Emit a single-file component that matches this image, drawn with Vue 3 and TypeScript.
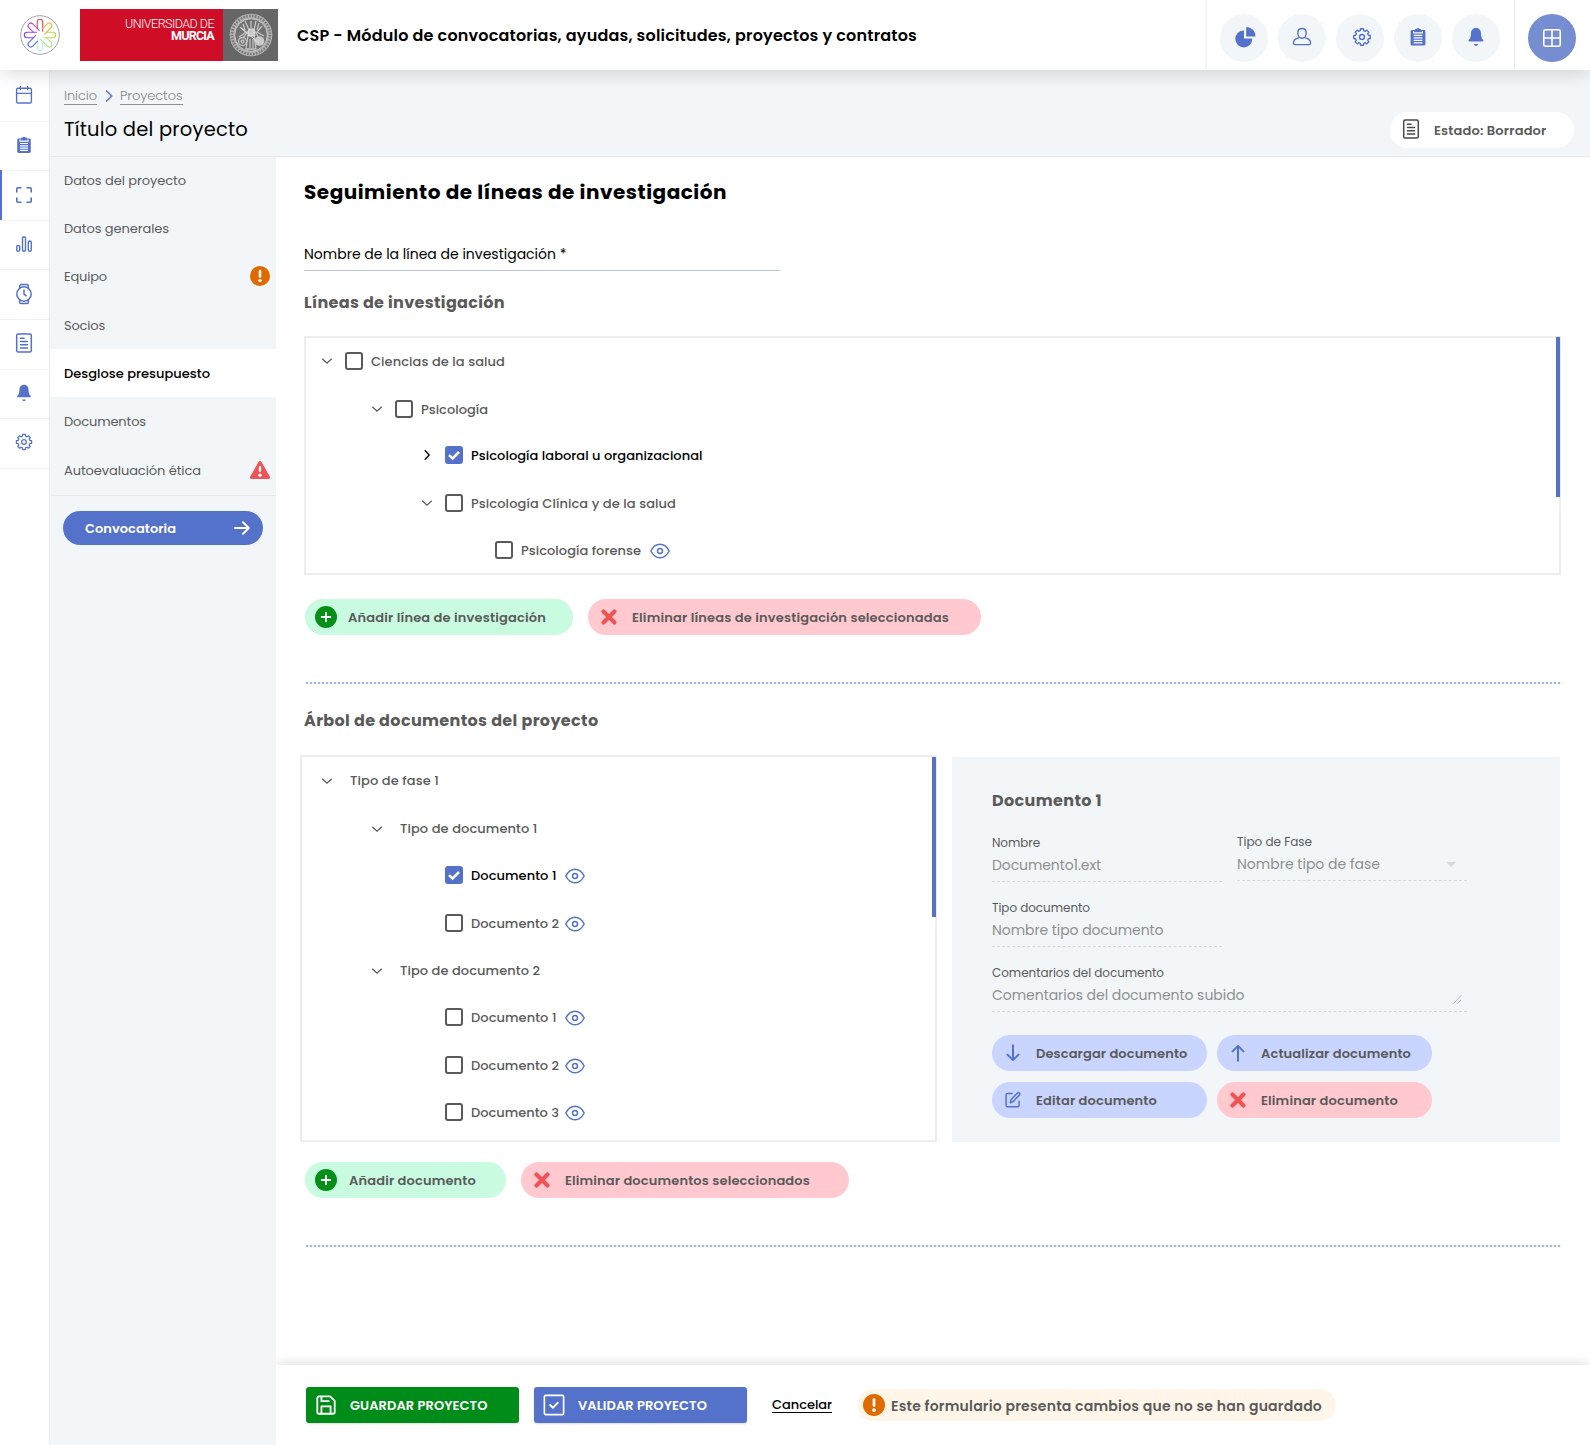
<script setup lang="ts">
interface TreeNode {
  label: string
  level: number
  width: number
  gap: number
  open?: 'down' | 'right'
  check?: boolean
  checked?: boolean
  eye?: boolean
}

// Tracks a label so that it takes exactly the given width.
const vFit = {
  mounted(el: HTMLElement, binding: { value: number }) {
    const natural = el.getBoundingClientRect().width
    const count = (el.textContent ?? '').length
    el.style.letterSpacing = `${(binding.value - natural) / count}px`
  },
}

function gearPath(outer: number, inner: number): string {
  const pts: string[] = []
  for (let i = 0; i < 8; i++) {
    for (const [r, d] of [[inner, -15], [outer, -10], [outer, 10], [inner, 15]]) {
      const a = ((i * 45 + d - 90) * Math.PI) / 180
      pts.push(`${(12 + r * Math.cos(a)).toFixed(2)} ${(12 + r * Math.sin(a)).toFixed(2)}`)
    }
  }
  return `M${pts.join('L')}Z`
}

const line = 'fill="none" stroke="currentColor" stroke-linecap="round" stroke-linejoin="round"'

const icons: Record<string, string> = {
  calendar: `<g ${line} stroke-width="1.4"><rect x="4.6" y="5.2" width="14.8" height="14.8" rx="1.6"/><path d="M4.6 10.4H19.4M8.400 3.400V6.600M15.600 3.400V6.600"/></g>`,
  clipboard: `<path fill="currentColor" d="M6 5h2.600l.8-1.100h1.200a1.500 1.500 0 0 1 2.800 0h1.200L15.400 5H18a1.400 1.400 0 0 1 1.400 1.400v12.800A1.400 1.400 0 0 1 18 20.600H6a1.400 1.400 0 0 1-1.400-1.400V6.400A1.400 1.400 0 0 1 6 5Z"/><path stroke="#fff" stroke-width="1.200" fill="none" d="M7.600 6V7.800H16.400V6M7.600 10.400h8.800M7.600 12.900h8.800M7.600 15.400h8.800M7.600 17.900h8.800"/>`,
  expand: `<path ${line} stroke-width="1.6" d="M4.800 9V5.800a1 1 0 0 1 1-1H9M15 4.800h3.200a1 1 0 0 1 1 1V9M19.200 15v3.200a1 1 0 0 1-1 1H15M9 19.200H5.800a1 1 0 0 1-1-1V15"/>`,
  bars: `<g ${line} stroke-width="1.400"><rect x="4.700" y="13.500" width="3" height="5.800" rx="1.500"/><rect x="10.500" y="4.700" width="3" height="14.600" rx="1.500"/><rect x="16.300" y="9" width="3" height="10.300" rx="1.500"/></g>`,
  watch: `<g ${line} stroke-width="1.500"><circle cx="12" cy="12" r="7.200"/><path d="M7.700 6V3.800a1.200 1.200 0 0 1 1.200-1.200h6.200a1.200 1.200 0 0 1 1.200 1.200V6M7.700 18v2.200a1.200 1.200 0 0 0 1.200 1.200h6.200a1.200 1.200 0 0 0 1.200-1.200V18M12 8v4.200l2.200 1.600"/></g>`,
  page: `<g ${line} stroke-width="1.500"><rect x="4.700" y="2.900" width="14.600" height="18.200" rx="1.400"/><path d="M8.500 7.200h3.500M8.500 10.500h7M8.500 13.700h7M8.500 16.900h7"/></g>`,
  bell: `<path fill="currentColor" d="M12 3c3.500 0 5 2.600 5 5.600 0 3.600.8 5.200 2.200 6.400.6.700.2 1.500-.6 1.500H5.400c-.8 0-1.200-.8-.6-1.500C6.200 13.800 7 12.200 7 8.600 7 5.600 8.500 3 12 3ZM10.100 19h3.800a1.900 1.900 0 0 1-3.800 0Z"/>`,
  gear: `<g ${line} stroke-width="1.400"><path d="${gearPath(8.400, 6.600)}"/><circle cx="12" cy="12" r="2.500"/></g>`,
  pie: `<path fill="currentColor" d="M11 5.400V13.600h8.300A8.500 8.500 0 1 1 11 5.400ZM13.200 2a9 9 0 0 1 9.300 9.400H13.200Z"/>`,
  user: `<g ${line} stroke-width="1.400"><path d="M12 3.500c2.700 0 4.200 2 4.200 4.700S14.500 13.200 12 13.200 7.800 10.900 7.800 8.200 9.300 3.500 12 3.500Z"/><path d="M8.600 12.900c-3.500.8-5.200 2.300-5.200 5.100 0 1 .6 1.600 1.500 1.600h14.200c.9 0 1.500-.6 1.500-1.600 0-2.800-1.700-4.300-5.200-5.100"/></g>`,
  grid: `<g ${line} stroke-width="1.600"><rect x="3.800" y="3.800" width="16.400" height="16.400" rx="1.500"/><path d="M12 3.800V20.200M3.800 12H20.200"/></g>`,
  plus: `<circle cx="12" cy="12" r="12" fill="currentColor"/><path stroke="#fff" stroke-width="2" stroke-linecap="round" d="M12 7.300v9.400M7.300 12h9.400"/>`,
  cross: `<path stroke="currentColor" stroke-width="4.600" stroke-linecap="round" d="M6 6l12 12M18 6 6 18"/>`,
  alert: `<circle cx="12" cy="12" r="12" fill="currentColor"/><path stroke="#fff" stroke-width="3" stroke-linecap="round" d="M12 6v6.500"/><circle cx="12" cy="17.500" r="2" fill="#fff"/>`,
  triangle: `<path fill="currentColor" d="M10.300 2.200a2 2 0 0 1 3.400 0l10 17.600a1.900 1.900 0 0 1-1.700 2.900H2a1.900 1.900 0 0 1-1.700-2.900Z"/><path stroke="#fff" stroke-width="2.800" stroke-linecap="round" d="M12 8.500v4.500"/><circle cx="12" cy="18.300" r="2" fill="#fff"/>`,
  eye: `<g ${line} stroke-width="1.600"><path d="M2 12C4.300 7.600 7.700 4.600 12 4.600S19.700 7.600 22 12c-2.300 4.400-5.700 7.400-10 7.400S4.300 16.400 2 12Z"/><circle cx="12" cy="12" r="2.700"/></g>`,
  down: `<path ${line} stroke-width="2.200" d="M12 3.500v16M6 13.800l6 6 6-6"/>`,
  up: `<path ${line} stroke-width="2.200" d="M12 20.500v-16M6 10.200l6-6 6 6"/>`,
  edit: `<g ${line} stroke-width="1.800"><path d="M11 4.200H5.200a1.500 1.500 0 0 0-1.500 1.500v13a1.500 1.500 0 0 0 1.500 1.500h12.600a1.500 1.500 0 0 0 1.500-1.500V13.500"/><path d="M8.800 15.200l.8-3.600 8.100-8.300c1-.9 3.300 1.200 2.300 2.300l-8 8.600Z"/></g>`,
  save: `<g ${line} stroke-width="2"><path d="M4.500 2.500h12l5 5v12a2 2 0 0 1-2 2h-15a2 2 0 0 1-2-2v-15a2 2 0 0 1 2-2Z"/><path d="M7 21v-7.500h10V21M7 3v4.800h8"/></g>`,
  valid: `<g ${line} stroke-width="1.800"><rect x="1.500" y="1.500" width="21" height="21" rx="1.500"/><path stroke-width="2" d="M7.800 12l3 3 5.400-5.600"/></g>`,
}

const rail = ['calendar', 'clipboard', 'expand', 'bars', 'watch', 'page', 'bell', 'gear']
const tools = ['pie', 'user', 'gear', 'clipboard', 'bell']

const nav = [
  { label: 'Datos del proyecto', width: 122 },
  { label: 'Datos generales', width: 105 },
  { label: 'Equipo', width: 43, mark: 'alert' },
  { label: 'Socios', width: 41 },
  { label: 'Desglose presupuesto', width: 146, active: true },
  { label: 'Documentos', width: 82 },
  { label: 'Autoevaluación ética', width: 137, mark: 'triangle' },
]

const lines: TreeNode[] = [
  { label: 'Ciencias de la salud', level: 0, width: 134, gap: 0, open: 'down', check: true },
  { label: 'Psicología', level: 1, width: 67, gap: 30, open: 'down', check: true },
  { label: 'Psicología laboral u organizacional', level: 2, width: 231.5, gap: 28, open: 'right', check: true, checked: true },
  { label: 'Psicología Clínica y de la salud', level: 2, width: 205, gap: 30, open: 'down', check: true },
  { label: 'Psicología forense', level: 3, width: 120, gap: 29, check: true, eye: true },
]

const documents: TreeNode[] = [
  { label: 'Tipo de fase 1', level: 0, width: 89, gap: 0, open: 'down' },
  { label: 'Tipo de documento 1', level: 1, width: 137.5, gap: 30, open: 'down' },
  { label: 'Documento 1', level: 2, width: 85.5, gap: 29, check: true, checked: true, eye: true },
  { label: 'Documento 2', level: 2, width: 88, gap: 30, check: true, eye: true },
  { label: 'Tipo de documento 2', level: 1, width: 140, gap: 29, open: 'down' },
  { label: 'Documento 1', level: 2, width: 85.5, gap: 29, check: true, eye: true },
  { label: 'Documento 2', level: 2, width: 88, gap: 30, check: true, eye: true },
  { label: 'Documento 3', level: 2, width: 88, gap: 29, check: true, eye: true },
]

const trees = { lines, documents }

const petals = ['#ef4a5a', '#f6b73c', '#b5e04a', '#a4ec86', '#b4f1f3', '#5a6cf0', '#8a45e6', '#d44ad8']
</script>

<template>
  <div class="app">
    <header class="topbar">
      <svg class="brand" viewBox="-20 -20 40 40">
        <circle r="19.300" fill="none" stroke="#999" stroke-width=".9" />
        <path
          v-for="(color, i) in petals"
          :key="color"
          d="M-2.700-6V-13a2.700 2.700 0 0 1 5.400 0V-3.200"
          :transform="`rotate(${i * 45})`"
          :stroke="color"
          fill="none"
          stroke-width="1.100"
        />
      </svg>
      <div class="university">
        <div class="uni-name">
          <span v-fit="89">UNIVERSIDAD DE</span>
          <b v-fit="43">MURCIA</b>
        </div>
        <div class="uni-seal">
          <svg viewBox="-22 -22 44 44">
            <circle r="21.300" fill="#b4b4b4" />
            <circle r="19" fill="none" stroke="#777" stroke-width="2.600" stroke-dasharray="1.600 1.300" />
            <circle r="16.300" fill="#717171" stroke="#c4c4c4" stroke-width="1" />
            <g fill="none" stroke="#c4c4c4" stroke-width="1.300">
              <path d="M-6-14-2-5-8 3M5-14 3-5 9 4M-11-8-5-3-12 2M11-9 6-3 13 1M0-14V-7M-3 0-5 14H5L3 0M-1 4V13M2 4V13M-8-11-6-5M8-12 6-5" />
              <circle cx="-8.500" cy="6.500" r="4" />
              <circle cx="-8.500" cy="6.500" r="1.500" />
            </g>
            <circle cx="8.500" cy="6" r="4.800" fill="#c9c9c9" />
            <path d="M-10-7 8 8M-2-6H3L4 1H-3Z" fill="#c9c9c9" stroke="#dedede" />
          </svg>
        </div>
      </div>
      <div class="app-name"><span v-fit="620">CSP - Módulo de convocatorias, ayudas, solicitudes, proyectos y contratos</span></div>
      <div class="tools">
        <button v-for="t in tools" :key="t" class="round">
          <svg viewBox="0 0 24 24" :class="t" v-html="icons[t]" />
        </button>
      </div>
      <div class="apps">
        <button class="round solid"><svg viewBox="0 0 24 24" v-html="icons.grid" /></button>
      </div>
    </header>

    <div class="body">
      <nav class="rail">
        <a v-for="(r, i) in rail" :key="r" :class="{ active: i === 2 }">
          <svg viewBox="0 0 24 24" :class="r" v-html="icons[r]" />
        </a>
      </nav>

      <div class="page">
        <div class="page-head">
          <div>
            <div class="crumbs">
              <a v-fit="33">Inicio</a>
              <svg viewBox="0 0 8 12"><path d="M1.200.500 6.700 6 1.200 11.500" fill="none" stroke="#5572cb" stroke-width="1.500" /></svg>
              <a v-fit="62.500">Proyectos</a>
            </div>
            <div class="page-title"><span v-fit="184">Título del proyecto</span></div>
          </div>
          <div class="status">
            <svg viewBox="0 0 24 24" v-html="icons.page" />
            <span v-fit="112.500">Estado: Borrador</span>
          </div>
        </div>

        <div class="columns">
          <aside class="side">
            <a v-for="n in nav" :key="n.label" class="side-item" :class="{ active: n.active }">
              <span v-fit="n.width">{{ n.label }}</span>
              <svg v-if="n.mark" :class="n.mark" viewBox="0 0 24 24" v-html="icons[n.mark]" />
            </a>
            <div class="side-foot">
              <button class="call">
                <span v-fit="91">Convocatoria</span>
                <svg viewBox="0 0 16 14"><path d="M1 7H14.500M9 1.300 14.800 7 9 12.700" fill="none" stroke="#fff" stroke-width="2" stroke-linecap="round" stroke-linejoin="round" /></svg>
              </button>
            </div>
          </aside>

          <div class="content">
            <main class="main">
              <h1><span v-fit="423">Seguimiento de líneas de investigación</span></h1>
              <label class="line-name"><span v-fit="262.500">Nombre de la línea de investigación *</span></label>
              <h2><span v-fit="201">Líneas de investigación</span></h2>

              <div class="tree tree-lines">
                <div v-for="(n, i) in trees.lines" :key="i" class="node" :class="{ chosen: n.checked }" :style="{ marginTop: n.gap + 'px', paddingLeft: n.level * 50 + 'px' }">
                  <span class="arrow">
                    <svg v-if="n.open" :class="n.open" viewBox="0 0 12 12"><path d="M1.300 3.800 6 8.200l4.700-4.400" fill="none" stroke="currentColor" stroke-width="1.300" /></svg>
                  </span>
                  <span class="box" :class="{ on: n.checked }"><svg v-if="n.checked" viewBox="0 0 18 18"><path d="M4 9.200 7.600 12.500 14 6" fill="none" stroke="#fff" stroke-width="2.500" /></svg></span>
                  <span v-fit="n.width" class="text">{{ n.label }}</span>
                  <svg v-if="n.eye" class="eye" viewBox="0 0 24 24" v-html="icons.eye" />
                </div>
                <i class="thumb"></i>
              </div>

              <div class="actions">
                <button class="pill green add-line"><svg viewBox="0 0 24 24" v-html="icons.plus" /><span v-fit="198">Añadir línea de investigación</span></button>
                <button class="pill red del-lines"><svg viewBox="0 0 24 24" v-html="icons.cross" /><span v-fit="317">Eliminar líneas de investigación seleccionadas</span></button>
              </div>
              <div class="dots"></div>

              <h2 class="second"><span v-fit="294.500">Árbol de documentos del proyecto</span></h2>
              <div class="split">
                <div class="tree tree-docs">
                  <div v-for="(n, i) in trees.documents" :key="i" class="node" :class="{ chosen: n.checked }" :style="{ marginTop: n.gap + 'px', paddingLeft: n.level * 50 + 'px' }">
                    <span class="arrow">
                      <svg v-if="n.open" :class="n.open" viewBox="0 0 12 12"><path d="M1.300 3.800 6 8.200l4.700-4.400" fill="none" stroke="currentColor" stroke-width="1.300" /></svg>
                    </span>
                    <span v-if="n.check" class="box" :class="{ on: n.checked }"><svg v-if="n.checked" viewBox="0 0 18 18"><path d="M4 9.200 7.600 12.500 14 6" fill="none" stroke="#fff" stroke-width="2.500" /></svg></span>
                    <span v-if="n.eye" class="doc-label"><span v-fit="n.width">{{ n.label }}</span></span>
                    <span v-else v-fit="n.width" class="branch">{{ n.label }}</span>
                    <svg v-if="n.eye" class="eye" viewBox="0 0 24 24" v-html="icons.eye" />
                  </div>
                  <i class="thumb"></i>
                </div>

                <section class="detail">
                  <h3><span v-fit="110">Documento 1</span></h3>
                  <div class="fields">
                    <div class="field">
                      <label><span v-fit="48">Nombre</span></label>
                      <div><span v-fit="109">Documento1.ext</span></div>
                    </div>
                    <div class="field raised">
                      <label><span v-fit="75">Tipo de Fase</span></label>
                      <div><span v-fit="143">Nombre tipo de fase</span><i class="caret"></i></div>
                    </div>
                    <div class="field">
                      <label><span v-fit="98">Tipo documento</span></label>
                      <div><span v-fit="171.500">Nombre tipo documento</span></div>
                    </div>
                    <div class="field wide">
                      <label><span v-fit="172">Comentarios del documento</span></label>
                      <div>
                        <span v-fit="252.500">Comentarios del documento subido</span>
                        <svg class="grip" viewBox="0 0 9 9"><path d="M.5 8.500 8 .5M4.500 8.500 8 5" stroke="#b5bcd0" fill="none" /></svg>
                      </div>
                    </div>
                  </div>
                  <div class="doc-actions">
                    <button class="pill blue"><svg viewBox="0 0 24 24" v-html="icons.down" /><span v-fit="151.500">Descargar documento</span></button>
                    <button class="pill blue"><svg viewBox="0 0 24 24" v-html="icons.up" /><span v-fit="150">Actualizar documento</span></button>
                    <button class="pill blue edit"><svg viewBox="0 0 24 24" v-html="icons.edit" /><span v-fit="121">Editar documento</span></button>
                    <button class="pill red"><svg viewBox="0 0 24 24" v-html="icons.cross" /><span v-fit="137">Eliminar documento</span></button>
                  </div>
                </section>
              </div>

              <div class="actions docs">
                <button class="pill green add-doc"><svg viewBox="0 0 24 24" v-html="icons.plus" /><span v-fit="127">Añadir documento</span></button>
                <button class="pill red del-docs"><svg viewBox="0 0 24 24" v-html="icons.cross" /><span v-fit="245">Eliminar documentos seleccionados</span></button>
              </div>
              <div class="dots"></div>
            </main>

            <footer class="footer">
              <button class="cta save"><svg viewBox="0 0 24 24" v-html="icons.save" /><span v-fit="137.500">GUARDAR PROYECTO</span></button>
              <button class="cta check"><svg viewBox="0 0 24 24" v-html="icons.valid" /><span v-fit="129">VALIDAR PROYECTO</span></button>
              <a v-fit="60" class="cancel">Cancelar</a>
              <div class="notice"><svg viewBox="0 0 24 24" v-html="icons.alert" /><span v-fit="431">Este formulario presenta cambios que no se han guardado</span></div>
            </footer>
          </div>
        </div>
      </div>
    </div>
  </div>
</template>

<style>
body {
  background: #fff;
}
</style>

<style scoped>
.app {
  display: flex;
  flex-direction: column;
  height: 1445px;
  overflow: hidden;
  font-family: Poppins, Inter, "Open Sans", sans-serif;
  font-size: 13px;
  color: #5a5a5a;
  background: #fff;
}
.app * {
  box-sizing: border-box;
}
span,
b,
a {
  white-space: nowrap;
}
svg {
  display: block;
  flex: none;
  overflow: visible;
}
button {
  border: 0;
  padding: 0;
  margin: 0;
  font: inherit;
  color: inherit;
  background: none;
}

/* Top bar */
.topbar {
  position: relative;
  z-index: 2;
  display: flex;
  flex: none;
  height: 70px;
  background: #fff;
  box-shadow: 0 3px 18px rgba(0, 0, 0, 0.15);
}
.brand {
  width: 40px;
  height: 40px;
  margin: 15px 20px 0;
}
.university {
  display: flex;
  width: 198px;
  height: 52px;
  margin-top: 9px;
}
.uni-name {
  display: flex;
  flex-direction: column;
  align-items: flex-end;
  width: 143px;
  padding: 9px 9px 0 0;
  font: 12.500px/12px Roboto, sans-serif;
  color: #fff;
  background: #d00d26;
}
.uni-name span {
  font-weight: 300;
}
.uni-seal {
  display: flex;
  align-items: center;
  justify-content: center;
  width: 55px;
  background: #666;
}
.uni-seal svg {
  width: 44px;
  height: 44px;
}
.app-name {
  display: flex;
  align-items: center;
  margin-left: 19px;
  font-size: 16px;
  font-weight: 600;
  color: #000;
}
.tools {
  display: flex;
  gap: 10px;
  margin-left: auto;
  padding: 14px 14px 0 13px;
  border-left: 2px solid #f2f5f9;
}
.apps {
  padding: 14px 14px 0 13px;
  border-left: 1px solid #e4e8ef;
}
.round {
  display: flex;
  align-items: center;
  justify-content: center;
  width: 48px;
  height: 48px;
  border-radius: 50%;
  color: #5572cb;
  background: #f2f6f9;
}
.round svg {
  width: 24px;
  height: 24px;
  margin-bottom: 2px;
}
.round svg.gear {
  margin-left: 3px;
}
.round svg.pie {
  margin-left: 1px;
}
.round.solid {
  color: #fff;
  background: #768dd2;
}
.round.solid svg {
  margin: 0;
}

/* Icon rail */
.body {
  display: flex;
  flex: 1;
  min-height: 0;
}
.rail {
  width: 50px;
  border-right: 1px solid #e6eaf0;
}
.rail a {
  position: relative;
  display: flex;
  align-items: center;
  justify-content: center;
  height: 49.600px;
  padding: 0 1px 2px 0;
  border-bottom: 1px solid #f2f3f5;
  color: #5572cb;
}
.rail a:first-child {
  height: 51.600px;
}
.rail a.active {
  padding-bottom: 0;
}
.rail a.active::before {
  position: absolute;
  top: -1px;
  left: 0;
  width: 2px;
  height: 50px;
  background: #5572cb;
  content: "";
}
.rail svg {
  width: 24px;
  height: 24px;
}
.rail .calendar {
  margin-top: 2px;
}
.rail .clipboard,
.rail .bell,
.rail .gear {
  width: 22px;
  height: 22px;
}

/* Page head */
.page {
  display: flex;
  flex: 1;
  flex-direction: column;
}
.page-head {
  display: flex;
  justify-content: space-between;
  height: 87px;
  padding: 16px 16px 0 14px;
  border-bottom: 1px solid #e6eaf0;
  background: #f2f6f9;
}
.crumbs {
  display: flex;
  align-items: center;
  height: 20px;
  font-size: 13px;
  font-weight: 300;
  color: #858585;
}
.crumbs a {
  border-bottom: 1px solid #909090;
  line-height: 17px;
}
.crumbs svg {
  width: 8px;
  height: 12px;
  margin: 0 7px 1px 8px;
}
.page-title {
  height: 40px;
  margin-top: 4px;
  font-size: 19.500px;
  line-height: 40px;
  color: #000;
}
.status {
  display: flex;
  align-items: center;
  width: 184px;
  height: 36px;
  margin-top: 26px;
  padding-left: 9px;
  border-radius: 18px;
  font-weight: 600;
  background: #fff;
}
.status svg {
  width: 24px;
  height: 24px;
  margin: 0 11px 2px 0;
  color: #4a4a4a;
}
.status span {
  padding-top: 2px;
}

/* Side menu */
.columns {
  display: flex;
  flex: 1;
}
.side {
  width: 226px;
  background: #f2f6f9;
}
.side-item {
  display: flex;
  align-items: center;
  justify-content: space-between;
  height: 48px;
  padding: 0 6px 0 14px;
  font-size: 13px;
}
.side-item:nth-child(n + 4) {
  padding-top: 2px;
}
.side-item:nth-child(7) {
  padding-top: 3px;
}
.side-item.active {
  font-weight: 500;
  color: #000;
  background: #fff;
}
.side-item svg {
  width: 20px;
  height: 20px;
}
.side-item .alert {
  margin-bottom: 2px;
  color: #e06a00;
}
.side-item .triangle {
  margin-bottom: 1px;
  color: #ef5356;
}
.side-foot {
  margin-top: 2px;
  padding: 15px 13px;
  border-top: 1px solid #e6eaf0;
}
.call {
  display: flex;
  align-items: center;
  justify-content: space-between;
  width: 200px;
  height: 34px;
  padding: 0 13px 0 22px;
  border-radius: 17px;
  font-weight: 600;
  color: #fff;
  background: #5572cb;
}
.call span {
  padding-top: 2px;
}
.call svg {
  width: 16px;
  height: 14px;
}

/* Main */
.content {
  display: flex;
  flex: 1;
  flex-direction: column;
}
.main {
  display: flex;
  flex: 1;
  flex-direction: column;
  padding: 15px 29px 0 28px;
}
h1,
h2,
h3 {
  display: flex;
  margin: 0;
  font-weight: 700;
}
h1 {
  height: 40px;
  font-size: 20px;
  line-height: 40px;
  color: #000;
}
h2 {
  height: 26px;
  margin-top: 18px;
  font-size: 16px;
  line-height: 28px;
}
h2.second {
  margin-top: 23px;
}
.line-name {
  display: flex;
  align-items: center;
  width: 476px;
  height: 33px;
  margin-top: 26px;
  border-bottom: 1px solid #bcc3df;
  font-size: 14px;
  color: #000;
}

/* Trees */
.tree {
  position: relative;
  border: 2px solid #ededed;
}
.tree-lines {
  height: 239px;
  margin-top: 21px;
  padding: 14px 0 0 15px;
}
.tree-docs {
  width: 637px;
  height: 387px;
  padding: 14px 0 0 19px;
}
.thumb {
  position: absolute;
  top: -1px;
  right: -1px;
  width: 4px;
  height: 160px;
  background: #5572cb;
}
.tree-docs .thumb {
  top: 0;
}
.node {
  display: flex;
  align-items: center;
  height: 18px;
  font-weight: 500;
}
.node.chosen {
  color: #000;
}
.arrow {
  width: 24px;
}
.arrow svg {
  width: 12px;
  height: 12px;
}
.arrow .right {
  transform: rotate(-90deg);
}
.tree-docs .arrow {
  padding-top: 2px;
}
.box {
  width: 18px;
  height: 18px;
  margin-right: 8px;
  border: 2px solid #5a5a5a;
  border-radius: 3px;
}
.box.on {
  border: 0;
  background: #5572cb;
}
.box svg {
  width: 18px;
  height: 18px;
}
.text,
.branch,
.doc-label {
  padding-top: 2px;
}
.branch {
  margin-left: 5px;
}
.doc-label {
  width: 94px;
}
.eye {
  width: 22px;
  height: 22px;
  margin: 1px 0 0 -1px;
  color: #5572cb;
}
.text + .eye {
  margin-left: 8px;
}

/* Pills */
.actions {
  display: flex;
  gap: 15px;
  margin: 24px 0 0 1px;
}
.actions.docs {
  margin-top: 20px;
}
.pill {
  display: flex;
  align-items: center;
  gap: 12px;
  height: 36px;
  padding-left: 10px;
  border-radius: 18px;
  font-weight: 600;
}
.pill span {
  padding-top: 1px;
}
.pill svg {
  width: 22px;
  height: 22px;
}
.green {
  background: #c9fbe0;
}
.green svg {
  color: #058f19;
}
.red {
  background: #ffc9cf;
}
.red svg {
  color: #ef5356;
}
.blue {
  background: #c9d5ff;
}
.blue svg {
  color: #5572cb;
}
.add-line {
  gap: 11px;
  width: 268px;
}
.del-lines {
  width: 393px;
}
.add-doc {
  width: 201px;
}
.del-docs {
  width: 328px;
}
.dots {
  height: 2px;
  margin: 47px 0 0 2px;
  background: repeating-linear-gradient(90deg, #a5b7e6 0 2px, #eef1fb 2px 4px);
}

/* Document detail */
.split {
  display: flex;
  gap: 15px;
  margin: 22px 0 0 -4px;
}
.detail {
  width: 608px;
  height: 385px;
  margin-top: 2px;
  padding: 30px 0 0 40px;
  background: #f2f6f9;
}
h3 {
  height: 26px;
  font-size: 16px;
  line-height: 28px;
}
.fields {
  display: grid;
  grid-template-columns: 230px 230px;
  gap: 17px 15px;
  margin-top: 21px;
}
.field {
  height: 48px;
  border-bottom: 1px dashed #d6d9dc;
}
.field.raised {
  position: relative;
  top: -1px;
}
.field.wide {
  grid-column: 1 / 3;
}
.field label {
  display: block;
  height: 18px;
  font-size: 12px;
  line-height: 18px;
}
.field div {
  display: flex;
  align-items: center;
  justify-content: space-between;
  height: 26px;
  font-size: 14px;
  color: #8f8f8f;
}
.caret {
  margin-right: 11px;
  border: 5px solid transparent;
  border-top-color: #d5d8db;
  border-bottom-width: 0;
}
.grip {
  width: 9px;
  height: 9px;
  margin: 9px 5px 0 0;
}
.doc-actions {
  display: grid;
  grid-template-columns: 215px 215px;
  gap: 11px 10px;
  margin-top: 23px;
}
.doc-actions .edit svg {
  width: 20px;
  height: 20px;
  margin: 0 1px;
}

/* Footer */
.footer {
  display: flex;
  align-items: center;
  height: 80px;
  padding-left: 30px;
  background: #fff;
  box-shadow: 0 -2px 10px rgba(0, 0, 0, 0.13);
  clip-path: inset(-20px 0 0 0);
}
.cta {
  display: flex;
  align-items: center;
  width: 213px;
  height: 36px;
  margin-right: 15px;
  padding-left: 9px;
  border-radius: 3px;
  font-weight: 600;
  color: #fff;
  box-shadow: 0 1px 2px rgba(0, 0, 0, 0.15);
}
.cta span {
  padding-top: 1px;
}
.cta svg {
  width: 22px;
  height: 22px;
  margin-right: 13px;
}
.save {
  background: #008c19;
}
.check {
  background: #5572cb;
}
.cancel {
  margin-left: 10px;
  border-bottom: 1px solid #000;
  font-weight: 500;
  line-height: 15px;
  color: #000;
}
.notice {
  display: flex;
  align-items: center;
  width: 479px;
  height: 32px;
  margin-left: 25px;
  padding-left: 6px;
  border-radius: 16px;
  font-size: 14px;
  font-weight: 600;
  background: #fff6e9;
}
.notice span {
  padding-top: 2px;
}
.notice svg {
  width: 22px;
  height: 22px;
  margin-right: 6px;
  color: #e06a00;
}
</style>
